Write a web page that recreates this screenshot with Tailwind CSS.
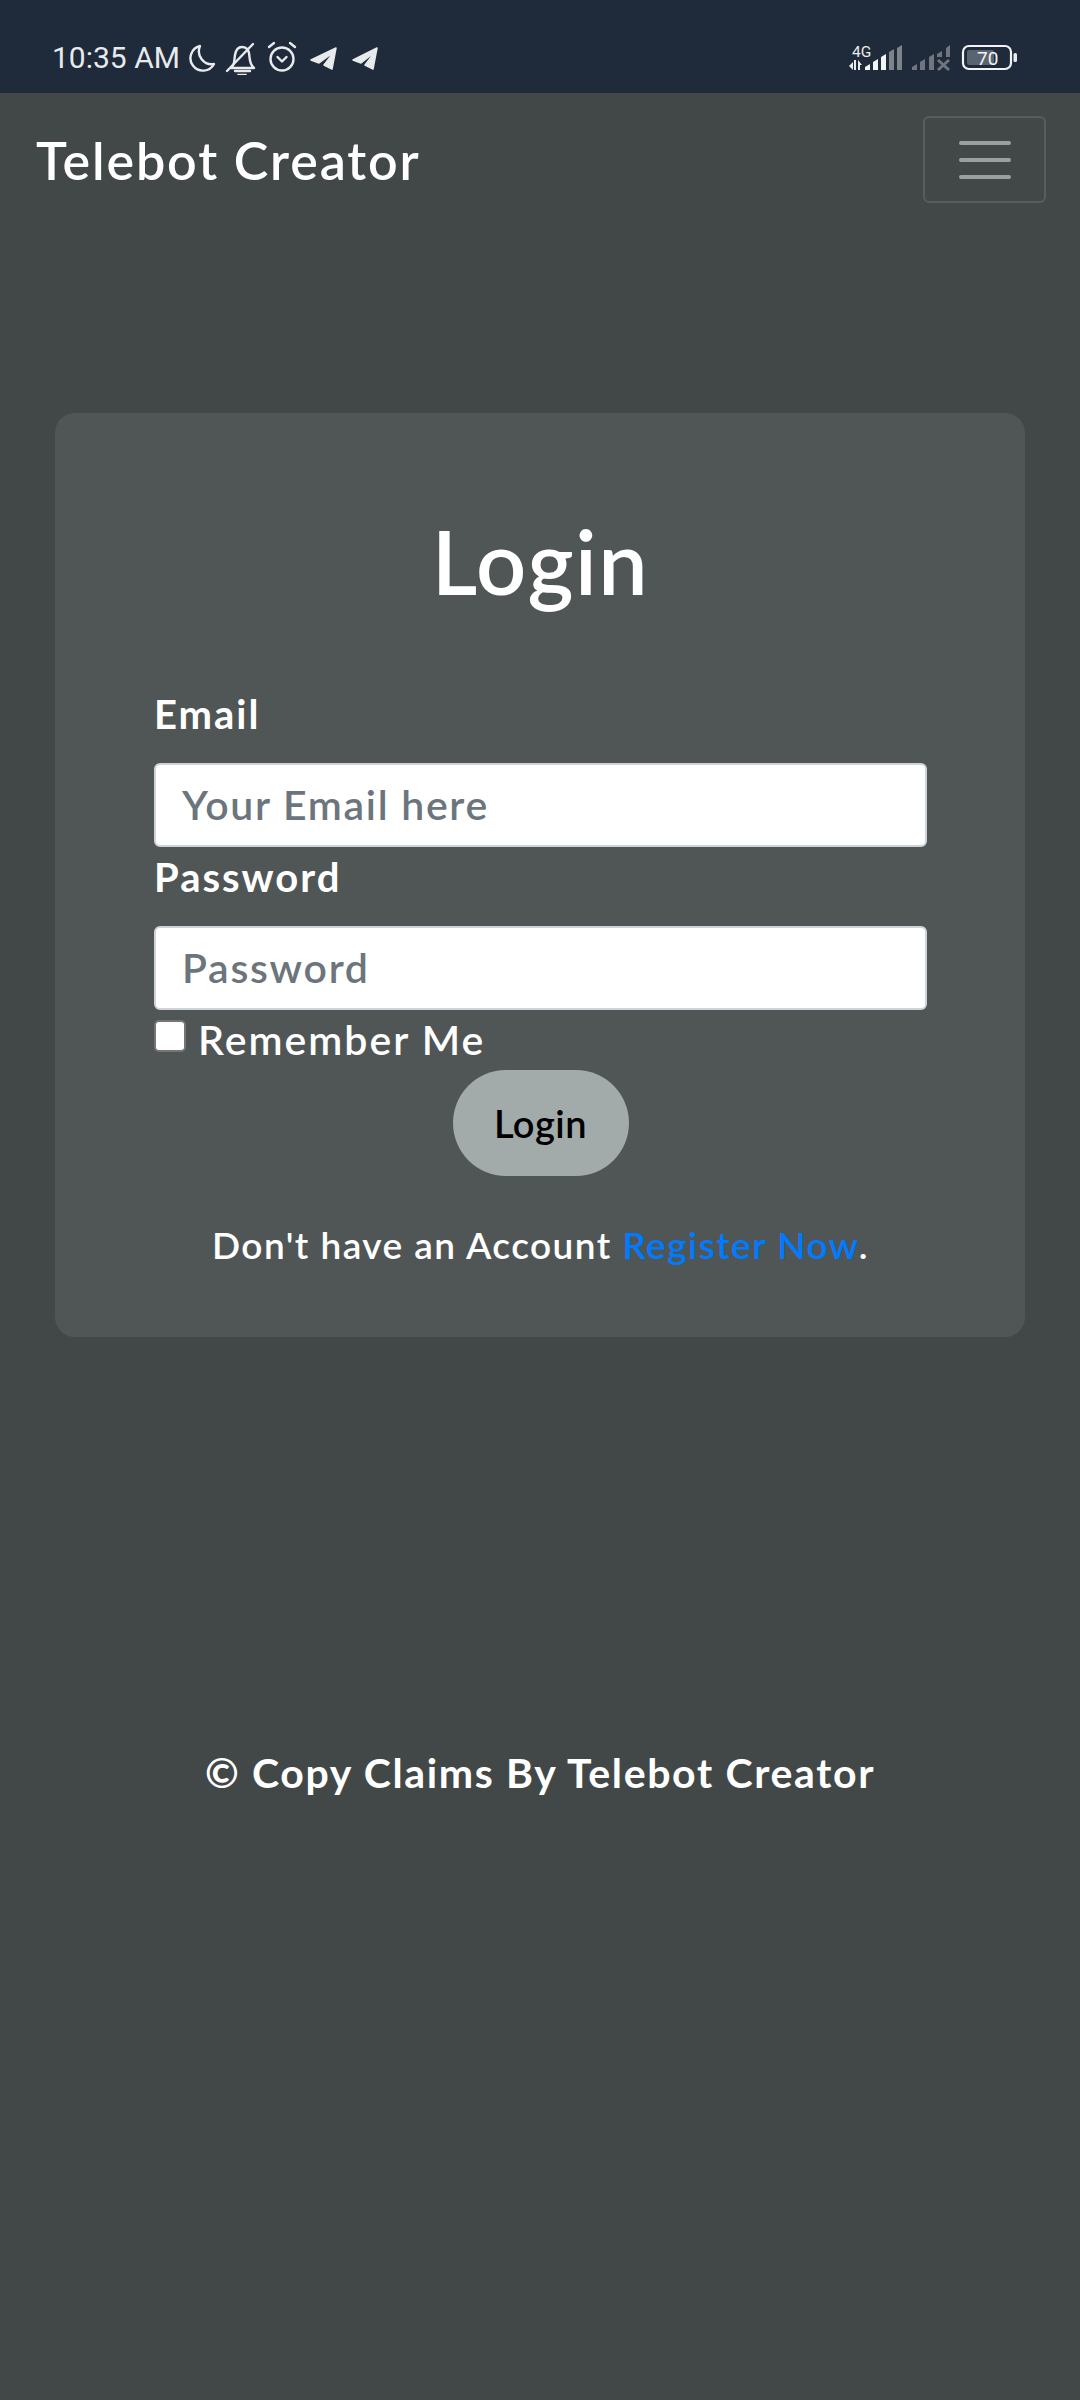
<!DOCTYPE html>
<html lang="en"><head><meta charset="utf-8"><title>Telebot Creator</title>
<script src="https://cdn.jsdelivr.net/npm/@tailwindcss/browser@4"></script></head>
<body class="m-0 bg-[#424848]">
<div class="w-[1080px] h-[2400px] bg-[#424848] font-['Lato','Noto_Sans',sans-serif] text-white overflow-hidden">
  <header class="h-[93px] bg-[#1f2a3a] relative flex items-start justify-between pl-[52px] pr-[62px] pt-[41px]">
    <div class="flex items-center text-[#e8eaec]">
      <span class="font-['Roboto',sans-serif] text-[30px] leading-[34px] w-[136px]">10:35 AM</span>
      <svg class="w-[192px] h-[34px]" viewBox="0 0 192 34" fill="none" stroke="#e8eaec" stroke-width="2.4" stroke-linecap="round" stroke-linejoin="round">
        <path d="M12 5 A12.500 12.500 0 1 0 26 23 A13 13 0 0 1 12 5Z"/>
        <path d="M43 27 C47 24 46 20 47 14 C48 8 51 6 54 6 C58 6 60 8 61 12 C62 18 61 23 66 27 Z"/><path d="M39 30 L65 3"/><path d="M47 30 H62" /><path d="M50 33.500 H58" stroke-width="1.6"/>
        <circle cx="94" cy="18" r="11.500"/><path d="M81 6 L86 2 M107 6 L102 2"/><path d="M89.500 16 L94 20.500 L98.500 16"/>
        <path d="M123 19 L148 7 L144 28 L136 24 L146 11 L131 22 Z" fill="#e8eaec" stroke-width="1.500"/>
        <path d="M165 19 L189 7 L185 28 L177 24 L187 11 L173 22 Z" fill="#e8eaec" stroke-width="1.500"/>
      </svg>
    </div>
    <div class="absolute left-[849px] top-[44px]">
      <svg class="w-[172px] h-[30px]" viewBox="0 0 172 30">
        <text x="3" y="12.500" font-family="Roboto, sans-serif" font-size="15.500" fill="#e8eaec">4G</text>
        <path d="M0 22 L4 18 V26 Z M5 16 H7 V26 H5 Z M9 16 L13 21 H11 V26 H9 Z" fill="#e8eaec"/>
        <path d="M16 26 V23 L21 20 V26 Z M24 26 V18 L29 15 V26 Z M32 26 V13 L37 10 V26 Z" fill="#f2f3f4"/>
        <path d="M40 26 V8 L45 5 V26 Z M48 26 V4 L53 1 V26 Z" fill="#7c838a"/>
        <path d="M63 26 V23 L68 20 V26 Z M71 26 V18 L76 15 V26 Z M80 26 V13 L85 10 V26 Z M88 10 L93 7 V13 H88 Z M97 4 L101 1 V13 H97 Z" fill="#6f767d"/>
        <path d="M89 16 L100 26 M100 16 L89 26" stroke="#6f767d" stroke-width="3" fill="none"/>
        <rect x="114" y="2" width="48" height="23" rx="6" fill="none" stroke="#f2f3f4" stroke-width="2.200"/>
        <rect x="118" y="6" width="27" height="15" rx="2" fill="#5a6470"/>
        <rect x="164.500" y="9" width="3.500" height="9" rx="1.500" fill="#e8eaec"/>
        <text x="128" y="21" font-family="Roboto, sans-serif" font-size="19" fill="#f2f3f4">70</text>
      </svg>
    </div>
  </header>

  <nav class="h-[127px] flex items-start justify-between pl-[36px] pr-[34px] pt-[23px]">
    <span class="mt-[9px] text-[52px] leading-[70px] font-semibold tracking-[1.850px] whitespace-nowrap">Telebot Creator</span>
    <button class="w-[123px] h-[87px] border-[2px] border-[#575c5c] rounded-[6px] flex flex-col items-center justify-center gap-[13px]">
      <span class="block w-[52px] h-[4px] rounded-full bg-[#9c9f9f]"></span>
      <span class="block w-[52px] h-[4px] rounded-full bg-[#9c9f9f]"></span>
      <span class="block w-[52px] h-[4px] rounded-full bg-[#9c9f9f]"></span>
    </button>
  </nav>

  <main class="mt-[193px] mx-[55px] w-[970px] h-[924px] bg-[#505656] rounded-[20px] pl-[99px] pr-[98px] pt-[98px]">
    <h1 class="text-center text-[88px] leading-[100px] font-semibold tracking-[1.500px]">Login</h1>
    <label class="block mt-[79px] text-[40px] leading-[48px] font-bold tracking-[2px]">Email</label>
    <div class="mt-[25px] h-[84px] bg-white rounded-[6px] border-[2px] border-[#ced4da] flex items-center pl-[26px] text-[41px] font-semibold text-[#6c757d] tracking-[1.700px]">Your Email here</div>
    <label class="block mt-[6px] text-[40px] leading-[48px] font-bold tracking-[2px]">Password</label>
    <div class="mt-[25px] h-[84px] bg-white rounded-[6px] border-[2px] border-[#ced4da] flex items-center pl-[26px] text-[41px] font-semibold text-[#6c757d] tracking-[1.700px]">Password</div>
    <div class="flex items-start mt-[10px] h-[50px]">
      <span class="block w-[32px] h-[32px] bg-white rounded-[5px] border-[2px] border-[#767676]"></span>
      <span class="ml-[12px] -mt-[4px] text-[41px] leading-[48px] font-semibold tracking-[2px]">Remember Me</span>
    </div>
    <div class="flex justify-center">
      <button class="w-[176px] h-[106px] rounded-[53px] bg-[#a2aaaa] text-black text-[38px] font-semibold tracking-[0.500px]">Login</button>
    </div>
    <p class="mt-[44px] text-center text-[37px] leading-[50px] font-semibold tracking-[1.450px] whitespace-nowrap">Don't have an Account <a class="text-[#007bff]">Register Now</a>.</p>
  </main>

  <footer class="mt-[406px] text-center text-[41px] leading-[60px] font-bold tracking-[1.650px]">© Copy Claims By Telebot Creator</footer>
</div>
</body></html>
